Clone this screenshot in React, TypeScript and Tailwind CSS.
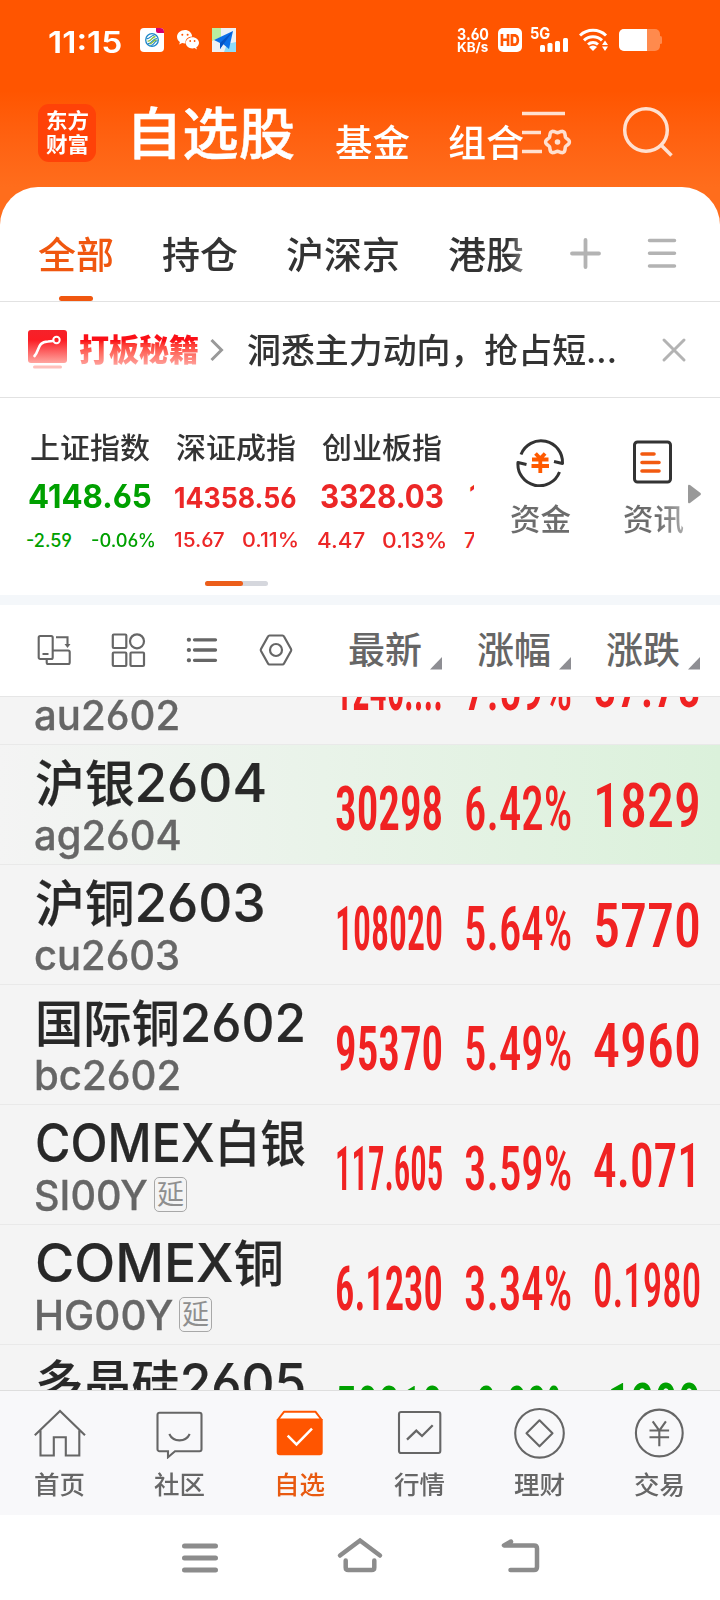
import { useLayoutEffect, useRef, useState, type ReactNode } from "react";

/** Single line of text, stretched or squeezed horizontally to fill its box. */
function Fit({ className, inner = "", children }: { className: string; inner?: string; children: ReactNode }) {
  const box = useRef<HTMLDivElement>(null);
  const line = useRef<HTMLSpanElement>(null);
  const [scale, setScale] = useState(1);
  useLayoutEffect(() => {
    if (box.current && line.current && line.current.offsetWidth > 0) {
      setScale(box.current.clientWidth / line.current.offsetWidth);
    }
  }, [children]);
  return (
    <div ref={box} className={`shrink-0 whitespace-nowrap ${className}`}>
      <span ref={line} className={`inline-block origin-left ${inner}`} style={{ transform: `scaleX(${scale})` }}>
        {children}
      </span>
    </div>
  );
}

function StatusBar() {
  return (
    <div className="flex h-20 items-center pl-[48px] text-white">
      <Fit className="mt-[3px] w-[75px] text-[30px] leading-8 font-semibold">11:15</Fit>
      <svg className="ml-[17px] shrink-0" width="24" height="24" viewBox="0 0 24 24">
        <rect width="24" height="24" rx="4" fill="#fff" />
        <path d="M16 0h4a4 4 0 0 1 4 4v1h-6a2 2 0 0 1-2-2z" fill="#d6006c" />
        <circle cx="12" cy="12" r="6.3" fill="none" stroke="#1c86c7" strokeWidth="1.3" />
        <path d="M6.500 10.500c3 1 4-3 8-3.500M8 15.500c4 1 4-5 9-5M10.500 17.500c4 0 3-4 7-5" fill="none" stroke="#1c86c7" strokeWidth="1.2" />
        <path d="M7.500 13c3.500 1 4-4 8-4.500M9.500 16c3 0 3.500-4 7-4" fill="none" stroke="#8cbf3f" strokeWidth="1.3" />
      </svg>
      <svg className="ml-[13px] shrink-0" width="22" height="20" viewBox="0 0 22 20">
        <path d="M8 0C3.500 0 0 3 0 6.800c0 2.200 1.100 4 2.900 5.200L2.200 14.500l2.900-1.500c.9.300 1.900.4 2.900.4h.6C7.800 9.300 11 6.500 15.200 6.400 14.700 2.700 11.700 0 8 0z" fill="#fff" />
        <path d="M15.400 7.200c-3.700 0-6.600 2.500-6.600 5.600s2.900 5.600 6.600 5.600c.8 0 1.500-.1 2.200-.3l2.300 1.300-.6-2.100c1.700-1 2.700-2.600 2.700-4.500 0-3.100-2.900-5.600-6.600-5.600z" fill="#fff" />
        <g fill="#ff5500"><circle cx="5.300" cy="4.700" r="1" /><circle cx="10.600" cy="4.700" r="1" /><circle cx="13.200" cy="11" r=".9" /><circle cx="17.600" cy="11" r=".9" /></g>
      </svg>
      <svg className="ml-[13px] shrink-0" width="24" height="24" viewBox="0 0 24 24">
        <rect width="24" height="24" fill="#eef1f5" />
        <path d="M0 0h9v9L0 13z" fill="#b9efa0" />
        <path d="M12 24l3-8 9-2v10z" fill="#8fdcf8" />
        <path d="M2 12L21 3 17 21 11 16 8 21V15z" fill="#0b6fe8" />
        <path d="M8 15L21 3 8 21z" fill="#0653c4" />
      </svg>
      <div className="ml-[221px] flex w-[33px] flex-col font-bold">
        <Fit className="w-[32px] text-[16px] leading-[13px]">3.60</Fit>
        <Fit className="w-[31px] text-[13px] leading-[12px]">KB/s</Fit>
      </div>
      <div className="ml-[8px] flex h-6 w-6 shrink-0 items-center justify-center rounded-[5px] bg-white">
        <Fit className="w-5 text-center text-[16px] leading-6 font-black text-[#ff5500]">HD</Fit>
      </div>
      <div className="ml-2 flex w-10 flex-col">
        <Fit className="w-[20px] text-[16px] leading-[11px] font-bold">5G</Fit>
        <svg className="-mt-px ml-[9px]" width="30" height="14" viewBox="0 0 30 14" fill="#fff">
          <rect x="1" y="7" width="5" height="7" rx="1.500" />
          <rect x="8.500" y="5" width="5" height="9" rx="1.500" />
          <rect x="16" y="3" width="5" height="11" rx="1.500" />
          <rect x="24" y="0" width="5" height="14" rx="1.500" />
        </svg>
      </div>
      <svg className="ml-[9px] shrink-0" width="30" height="24" viewBox="0 0 30 24">
        <g fill="none" stroke="#fff" strokeWidth="3">
          <path d="M1 7.500a19 19 0 0 1 26 0" />
          <path d="M5 12.300a13 13 0 0 1 18 0" />
          <path d="M9 16.500a7.500 7.500 0 0 1 10 0" />
        </g>
        <path d="M10 19a6 6 0 0 1 8 0l-4 4z" fill="#fff" />
        <path d="M26 12.500l3 4.500h-6zM26 23l3-4.500h-6z" fill="#fff" />
      </svg>
      <svg className="ml-[10px] shrink-0" width="43" height="22" viewBox="0 0 43 22">
        <rect width="41" height="22" rx="5" fill="#ff8a4d" />
        <rect x="40" y="7" width="3" height="8" rx="1.500" fill="#ff8a4d" />
        <path d="M5 0h23v22H5a5 5 0 0 1-5-5V5a5 5 0 0 1 5-5z" fill="#fff" />
      </svg>
    </div>
  );
}

/** Outline of a six-lobed gear centred on (cx, cy). */
function gearOutline(cx: number, cy: number, radius: number, depth: number) {
  const steps = 72;
  const points = Array.from({ length: steps }, (_, i) => {
    const angle = (i / steps) * Math.PI * 2;
    const r = radius + depth * Math.cos(angle * 6);
    return `${(cx + r * Math.cos(angle)).toFixed(2)} ${(cy + r * Math.sin(angle)).toFixed(2)}`;
  });
  return `M${points.join("L")}Z`;
}

const gear = gearOutline(36.5, 34, 10.6, 1.3);

function TitleBar() {
  return (
    <div className="flex h-[107px] items-start text-white">
      <div className="mt-6 ml-[38px] flex h-[58px] w-[58px] shrink-0 flex-col items-center justify-center rounded-[11px] bg-[#ff4208] text-[21px] leading-6 font-semibold">
        <Fit className="w-[43px]">东方</Fit>
        <Fit className="w-[43px]">财富</Fit>
      </div>
      <Fit className="mt-[24px] ml-[30px] w-[169px] text-[56px] leading-[60px] font-medium [-webkit-text-stroke:0.5px_white]">自选股</Fit>
      <Fit className="mt-[44px] ml-[40px] w-[75px] text-[37px] leading-10 font-medium">基金</Fit>
      <Fit className="mt-[44px] ml-[38px] w-[76px] text-[37px] leading-10 font-medium">组合</Fit>
      <svg className="mt-7 -ml-[3px] shrink-0" width="52" height="50" viewBox="0 0 52 50" fill="none" stroke="#ffe0d0" strokeWidth="3.500">
        <path d="M1 5.500h43M1 24.500h19M1 43.500h20" />
        <path d={gear} strokeLinejoin="round" />
        <circle cx="36.500" cy="34" r="2.800" fill="#ffe0d0" stroke="none" />
      </svg>
      <svg className="mt-6 ml-[49px] shrink-0" width="54" height="54" viewBox="0 0 54 54" fill="none" stroke="#ffe0d0" strokeWidth="3.500">
        <circle cx="24" cy="26" r="21.300" />
        <path d="M39 41l10.500 10.500" />
      </svg>
    </div>
  );
}

function Tabs() {
  return (
    <div className="flex h-[115px] items-start border-b border-[#e2e2e2] pl-[38px] text-[37px] leading-10 font-medium text-[#333]">
      <div className="flex h-[114px] w-[76px] shrink-0 flex-col items-center justify-between pt-[49px] text-[#f0570f]">
        <Fit className="w-[76px]">全部</Fit>
        <div className="h-[5px] w-[34px] rounded-full bg-[#f0570f]" />
      </div>
      <Fit className="mt-[49px] ml-[48px] w-[76px]">持仓</Fit>
      <Fit className="mt-[49px] ml-[48px] w-[114px]">沪深京</Fit>
      <Fit className="mt-[49px] ml-[48px] w-[76px]" inner="bg-gradient-to-r from-[#333] from-80% to-[#888] bg-clip-text text-transparent">港股</Fit>
      <svg className="mt-[50px] ml-[45px] shrink-0" width="34" height="34" viewBox="0 0 34 34" stroke="#b3b3b3" strokeWidth="3.800" strokeLinecap="round">
        <path d="M16.500 3v27M3 16.500h27" />
      </svg>
      <svg className="mt-[50px] ml-[44px] shrink-0" width="32" height="34" viewBox="0 0 32 34" stroke="#b3b3b3" strokeWidth="3.500" strokeLinecap="round">
        <path d="M2.500 3.500h25M2.500 16.300h25M2.500 29h25" />
      </svg>
    </div>
  );
}

function Banner() {
  return (
    <div className="flex h-24 items-center border-b border-[#e2e2e2] pl-7">
      <svg className="shrink-0" width="39" height="40" viewBox="0 0 39 40">
        <defs>
          <linearGradient id="badge" x1="0" y1="0" x2="0" y2="1">
            <stop offset="0" stopColor="#f5222a" />
            <stop offset=".3" stopColor="#fb1d24" />
            <stop offset="1" stopColor="#ffa6a0" />
          </linearGradient>
        </defs>
        <rect width="39" height="33" rx="3" fill="url(#badge)" />
        <rect x="5" y="35.500" width="29" height="3" rx="1.500" fill="#ffc0bb" />
        <path d="M6.500 26C12 20 9 12 20 11.500l5-.5" fill="none" stroke="#fff" strokeWidth="2.600" strokeLinecap="round" />
        <circle cx="28.500" cy="10" r="3.200" fill="none" stroke="#fff" strokeWidth="2" />
      </svg>
      <Fit className="ml-3 w-[120px] text-[31px] leading-9 font-black" inner="bg-gradient-to-b from-[#fb0f17] from-25% to-[#ff9d97] to-90% bg-clip-text text-transparent">打板秘籍</Fit>
      <svg className="ml-[10px] shrink-0" width="16" height="24" viewBox="0 0 16 24" fill="none" stroke="#999" strokeWidth="3">
        <path d="M2.500 2l10 10-10 10" />
      </svg>
      <Fit className="mt-[2px] ml-[22px] w-[370px] text-[34px] leading-10 font-medium text-[#333]">洞悉主力动向，抢占短...</Fit>
      <svg className="ml-[44px] shrink-0" width="26" height="26" viewBox="0 0 26 26" stroke="#b3b3b3" strokeWidth="3" strokeLinecap="round">
        <path d="M3 3l20 20M23 3L3 23" />
      </svg>
    </div>
  );
}

function Indices() {
  return (
    <div className="flex h-[197px] items-start">
      <div className="flex h-full w-[474px] shrink-0 flex-col">
        <div className="flex h-[166px] overflow-hidden">
          <div className="ml-[26px] flex w-[148px] shrink-0 flex-col pt-[31px] text-[#00a000]">
            <Fit className="ml-[4px] w-[120px] text-[29px] leading-[40px] font-medium text-[#333]">上证指数</Fit>
            <Fit className="-mt-px ml-[2px] w-[124px] text-[33px] leading-[56px] font-bold">4148.65</Fit>
            <div className="mt-px flex text-[18px] leading-[31px] font-medium">
              <Fit className="w-[46px]">-2.59</Fit>
              <Fit className="ml-[19px] w-[65px]">-0.06%</Fit>
            </div>
          </div>
          <div className="flex w-[143px] shrink-0 flex-col pt-[31px] text-[#ec2727]">
            <Fit className="ml-[2px] w-[120px] text-[29px] leading-[40px] font-medium text-[#333]">深证成指</Fit>
            <Fit className="w-[123px] text-[29px] leading-[58px] font-bold">14358.56</Fit>
            <div className="-mt-[2px] flex text-[20px] leading-[31px] font-medium">
              <Fit className="w-[51px]">15.67</Fit>
              <Fit className="ml-[17px] w-[57px]">0.11%</Fit>
            </div>
          </div>
          <div className="flex w-[146px] shrink-0 flex-col pt-[31px] text-[#ec2727]">
            <Fit className="ml-[5px] w-[120px] text-[29px] leading-[40px] font-medium text-[#333]">创业板指</Fit>
            <Fit className="-mt-px ml-[3px] w-[124px] text-[33px] leading-[56px] font-bold">3328.03</Fit>
            <div className="mt-px flex text-[21px] leading-[31px] font-medium">
              <Fit className="w-[48px]">4.47</Fit>
              <Fit className="ml-[17px] w-[65px]">0.13%</Fit>
            </div>
          </div>
          <div className="flex w-[146px] shrink-0 flex-col pt-[70px] text-[#ec2727]">
            <span className="ml-[6px] text-[31px] leading-[56px] font-bold">1</span>
            <span className="mt-px ml-px text-[21px] leading-[31px] font-medium">7</span>
          </div>
        </div>
        <div className="mt-[17px] ml-[205px] h-[5px] w-[63px] overflow-hidden rounded-full bg-[#d5d7dd]">
          <div className="h-full w-[38px] rounded-r-full bg-[#ec5e1a]" />
        </div>
      </div>
      <div className="ml-[35px] flex w-[62px] shrink-0 flex-col items-center pt-[39px]">
        <svg width="50" height="50" viewBox="0 0 50 50" fill="none" stroke="#333" strokeWidth="3" strokeLinejoin="round">
          <path d="M6 17.500A21.500 21.500 0 0 1 47.500 26.500l-8.500-2" />
          <path d="M44.500 35A21.500 21.500 0 0 1 3 25.500l8.500 2" />
          <path d="M20.500 16.500l4.800 5 4.800-5M17 22.500h16.500M16.500 29h17.500M25.300 22v14" stroke="#ff5a00" strokeWidth="3.800" />
        </svg>
        <Fit className="mt-[14px] w-[61px] text-[30px] leading-9 font-medium text-[#6c6c6c]">资金</Fit>
      </div>
      <div className="ml-[51px] flex w-[62px] shrink-0 flex-col items-center pt-[39px]">
        <svg width="50" height="50" viewBox="0 0 50 50" fill="none" strokeWidth="3">
          <rect x="6.500" y="5" width="36" height="40" rx="3" stroke="#333" />
          <path d="M14 17h12M14 25.500h17M14 34h17" stroke="#f25a10" strokeWidth="3.600" strokeLinecap="round" />
        </svg>
        <Fit className="mt-[14px] w-[61px] text-[30px] leading-9 font-medium" inner="bg-gradient-to-r from-[#6c6c6c] from-55% to-[#aaa] bg-clip-text text-transparent">资讯</Fit>
      </div>
      <svg className="mt-[86px] ml-1 shrink-0" width="14" height="20" viewBox="0 0 14 20" fill="#999">
        <path d="M0 2q0-2 2-1l10.500 8q1 1 0 2L2 19q-2 1-2-1z" />
      </svg>
    </div>
  );
}

function Column({ label }: { label: string }) {
  return (
    <div className="flex w-[129px] shrink-0 items-start">
      <Fit className="mt-[26px] w-[74px] text-[37px] leading-10 font-medium text-[#666]">{label}</Fit>
      <svg className="mt-[52px] ml-[8px] shrink-0" width="13" height="13" viewBox="0 0 13 13" fill="#8e8e93">
        <path d="M0 12.500L12 0v12.500z" />
      </svg>
    </div>
  );
}

function TableHeader() {
  return (
    <div className="flex h-[92px] shrink-0 items-start overflow-hidden border-b border-[#e6e6e6]">
      <div className="flex w-[348px] shrink-0 items-center pt-[27px] pl-[36px]">
        <svg width="36" height="36" viewBox="0 0 36 36" fill="none" stroke="#666" strokeWidth="2.100">
          <rect x="2.700" y="4" width="14" height="23" rx="1.500" />
          <path d="M6.500 22h6M16.700 18.500h15.500a1.500 1.500 0 0 1 1.500 1.500v10.500a1.500 1.500 0 0 1-1.500 1.500h-20a1.500 1.500 0 0 1-1.500-1.500V27M20 5.300h11.500v7" />
          <path d="M28.500 12h6l-3 4z" fill="#666" stroke="none" />
        </svg>
        <svg className="ml-[38px]" width="36" height="36" viewBox="0 0 36 36" fill="none" stroke="#666" strokeWidth="2.200">
          <rect x="2.800" y="2.500" width="13.500" height="13.500" rx="1" />
          <circle cx="27" cy="9.300" r="7" />
          <rect x="2.800" y="20.500" width="13.500" height="13.500" rx="1" />
          <rect x="20.500" y="20.500" width="13.500" height="13.500" rx="1" />
        </svg>
        <svg className="ml-[38px]" width="36" height="36" viewBox="0 0 36 36" stroke="#666" strokeWidth="3.300" strokeLinecap="round">
          <path d="M10.500 7.800h21M10.500 18h21M10.500 28.300h21" />
          <path d="M4.700 7.800h.4M4.700 18h.4M4.700 28.300h.4" strokeWidth="3.900" />
        </svg>
        <svg className="ml-[38px]" width="36" height="36" viewBox="0 0 36 36" fill="none" stroke="#666" strokeWidth="2.200" strokeLinejoin="round">
          <path d="M11.500 3.500h13q1 0 1.500 1L33 17q.5 1 0 2l-7 12.500q-.5 1-1.500 1h-13q-1 0-1.500-1L3 19q-.5-1 0-2l7-12.500q.5-1 1.500-1z" />
          <circle cx="18" cy="18" r="6" />
        </svg>
      </div>
      <Column label="最新" />
      <Column label="涨幅" />
      <Column label="涨跌" />
    </div>
  );
}

type Quote = {
  name: ReactNode;
  nameWidth: string;
  code: string;
  codeWidth: string;
  delayed?: boolean;
  active?: boolean;
  down?: boolean;
  price: string;
  percent: string;
  change: string;
};

const quotes: Quote[] = [
  { name: <>沪金<Latin>2602</Latin></>, nameWidth: "w-[232px]", code: "au2602", codeWidth: "w-[146px]", price: "1246....", percent: "7.59%", change: "87.78" },
  { name: <>沪银<Latin>2604</Latin></>, nameWidth: "w-[232px]", code: "ag2604", codeWidth: "w-[148px]", price: "30298", percent: "6.42%", change: "1829", active: true },
  { name: <>沪铜<Latin>2603</Latin></>, nameWidth: "w-[231px]", code: "cu2603", codeWidth: "w-[146px]", price: "108020", percent: "5.64%", change: "5770" },
  { name: <>国际铜<Latin>2602</Latin></>, nameWidth: "w-[271px]", code: "bc2602", codeWidth: "w-[147px]", price: "95370", percent: "5.49%", change: "4960" },
  { name: <><Latin>COMEX</Latin>白银</>, nameWidth: "w-[271px]", code: "SI00Y", codeWidth: "w-[114px]", delayed: true, price: "117.605", percent: "3.59%", change: "4.071" },
  { name: <><Latin>COMEX</Latin>铜</>, nameWidth: "w-[249px]", code: "HG00Y", codeWidth: "w-[139px]", delayed: true, price: "6.1230", percent: "3.34%", change: "0.1980" },
  { name: <>多晶硅<Latin>2605</Latin></>, nameWidth: "w-[271px]", code: "ps2605", codeWidth: "w-[146px]", down: true, price: "50210", percent: "-2.33%", change: "-1200" },
];

function Latin({ children }: { children: ReactNode }) {
  return <span className="text-[53px]">{children}</span>;
}

function Row({ q }: { q: Quote }) {
  return (
    <div className={`flex h-[120px] shrink-0 items-start overflow-hidden border-b border-[#e9e9e9] ${q.active ? "bg-gradient-to-r from-[#f4f4f4] via-[#e9f3e9] via-45% to-[#dbf1db]" : ""}`}>
      <div className="flex w-[336px] shrink-0 flex-col pl-[35px]">
        <Fit className={`mt-[8px] text-[50px] leading-[60px] font-medium text-[#282828] [-webkit-text-stroke:0.2px] ${q.nameWidth}`}>{q.name}</Fit>
        <div className="-mt-[3px] -ml-px flex items-center">
          <Fit className={`text-[41px] leading-[48px] font-medium text-[#666] [-webkit-text-stroke:0.3px] ${q.codeWidth}`}>{q.code}</Fit>
          {q.delayed && (
            <div className="-mt-px ml-[6px] flex h-[35px] w-[33px] items-center justify-center rounded-[5px] border border-[#a8a8a8] text-[27px] leading-[33px] text-[#8f8f8f]">延</div>
          )}
        </div>
      </div>
      <div className={`flex font-["Roboto_Condensed",Roboto,sans-serif] text-[61px] leading-[64px] font-semibold ${q.down ? "text-[#00a000]" : "text-[#f02222]"}`}>
        <Fit className="mt-8 -ml-px w-[108px]">{q.price}</Fit>
        <Fit className="mt-8 ml-[21px] w-[108px] font-medium">{q.percent}</Fit>
        <Fit className="mt-[29px] ml-[21px] w-[108px] font-medium">{q.change}</Fit>
      </div>
    </div>
  );
}

function NavItem({ label, active, children }: { label: string; active?: boolean; children: ReactNode }) {
  return (
    <div className={`flex w-[120px] shrink-0 flex-col items-center pt-4 ${active ? "text-[#e85a10]" : "text-[#666]"}`}>
      <svg width="52" height="52" viewBox="0 0 52 52" fill="none" stroke="currentColor" strokeWidth="2.100">
        {children}
      </svg>
      <Fit className="mt-[10px] mr-px w-[51px] text-[25px] leading-8 font-medium">{label}</Fit>
    </div>
  );
}

function BottomNav() {
  return (
    <div className="flex h-[125px] shrink-0 border-t border-[#dedede] bg-[#f8f8fa]">
      <NavItem label="首页">
        <path d="M.8 28.300L26 4l25 24.300M6.500 23.500v25h13.300V30.300h12v18.200h13.500v-25" />
      </NavItem>
      <NavItem label="社区">
        <path d="M5.500 5.700h40a2 2 0 0 1 2 2v34.500a2 2 0 0 1-2 2H21l-7 6v-6H5.500a2 2 0 0 1-2-2V7.700a2 2 0 0 1 2-2zM15.300 27c4 8.500 16.400 8.500 20.400 0" />
      </NavItem>
      <NavItem label="自选" active>
        <path d="M4 12.500L10.200 4.700h31.200l6 7.800z" fill="#fff" stroke="#ff5500" strokeWidth="2" strokeLinejoin="round" />
        <path d="M2.700 12h46v33.300a3 3 0 0 1-3 3h-40a3 3 0 0 1-3-3z" fill="#ff5500" stroke="none" />
        <path d="M13.700 28.700l8.800 8.800L38 21.700" stroke="#fff" strokeWidth="2.500" />
      </NavItem>
      <NavItem label="行情">
        <rect x="5" y="5" width="41.300" height="41" rx="2" />
        <path d="M13 32.700l9.300-9 5.700 5.300 10.700-10.700" strokeWidth="2.300" />
      </NavItem>
      <NavItem label="理财">
        <circle cx="25.500" cy="26.300" r="24.300" />
        <path d="M25.500 13.300l13 13-13 13-13-13z" strokeLinejoin="round" />
      </NavItem>
      <NavItem label="交易">
        <circle cx="25.300" cy="26" r="23.400" />
        <path d="M18.700 14.300l6.600 9.400 6.600-9.400M15.500 23.500h19.600M15.500 30.300h19.600M25.300 23.500v15.800" />
      </NavItem>
    </div>
  );
}

function SystemNav() {
  return (
    <div className="flex h-[85px] shrink-0 items-start bg-white pt-5 pl-[180px]">
      <svg width="40" height="40" viewBox="0 0 40 40" stroke="#8c8c8c" strokeWidth="5" strokeLinecap="round">
        <path d="M4.500 11h31M4.500 23h31M4.500 35h31" />
      </svg>
      <svg className="ml-[116px]" width="48" height="40" viewBox="0 0 48 40" fill="none" stroke="#8c8c8c" strokeWidth="4.500" strokeLinecap="round">
        <path d="M4 20.500L24 5.500l20 15M9.700 25.500v7q0 2.500 2.500 2.500h23.600q2.500 0 2.500-2.500v-7" />
      </svg>
      <svg className="ml-[116px]" width="42" height="40" viewBox="0 0 42 40" fill="none" stroke="#8c8c8c" strokeWidth="4.500" strokeLinecap="round" strokeLinejoin="round">
        <path d="M11 6.500L4 10.500h30q3 0 3 3V32q0 3-3 3H10.500" />
      </svg>
    </div>
  );
}

export default function App() {
  return (
    <div className="flex h-[1600px] w-[720px] flex-col overflow-hidden bg-white font-['Inter','Noto_Sans_CJK_SC',sans-serif] [font-feature-settings:'cv03','cv04']">
      <div className="shrink-0 bg-gradient-to-b from-[#ff5500] from-30% to-[#ff6d1c] to-62%">
        <StatusBar />
        <TitleBar />
        <div className="rounded-t-[38px] bg-white">
          <Tabs />
        </div>
      </div>
      <Banner />
      <Indices />
      <div className="h-[10px] shrink-0 bg-[#f4f7fa]" />
      <TableHeader />
      <div className="min-h-0 flex-1 overflow-hidden bg-[#f4f4f4]">
        <div className="-mt-[72px] flex flex-col">
          {quotes.map((q) => (
            <Row key={q.code} q={q} />
          ))}
        </div>
      </div>
      <BottomNav />
      <SystemNav />
    </div>
  );
}
